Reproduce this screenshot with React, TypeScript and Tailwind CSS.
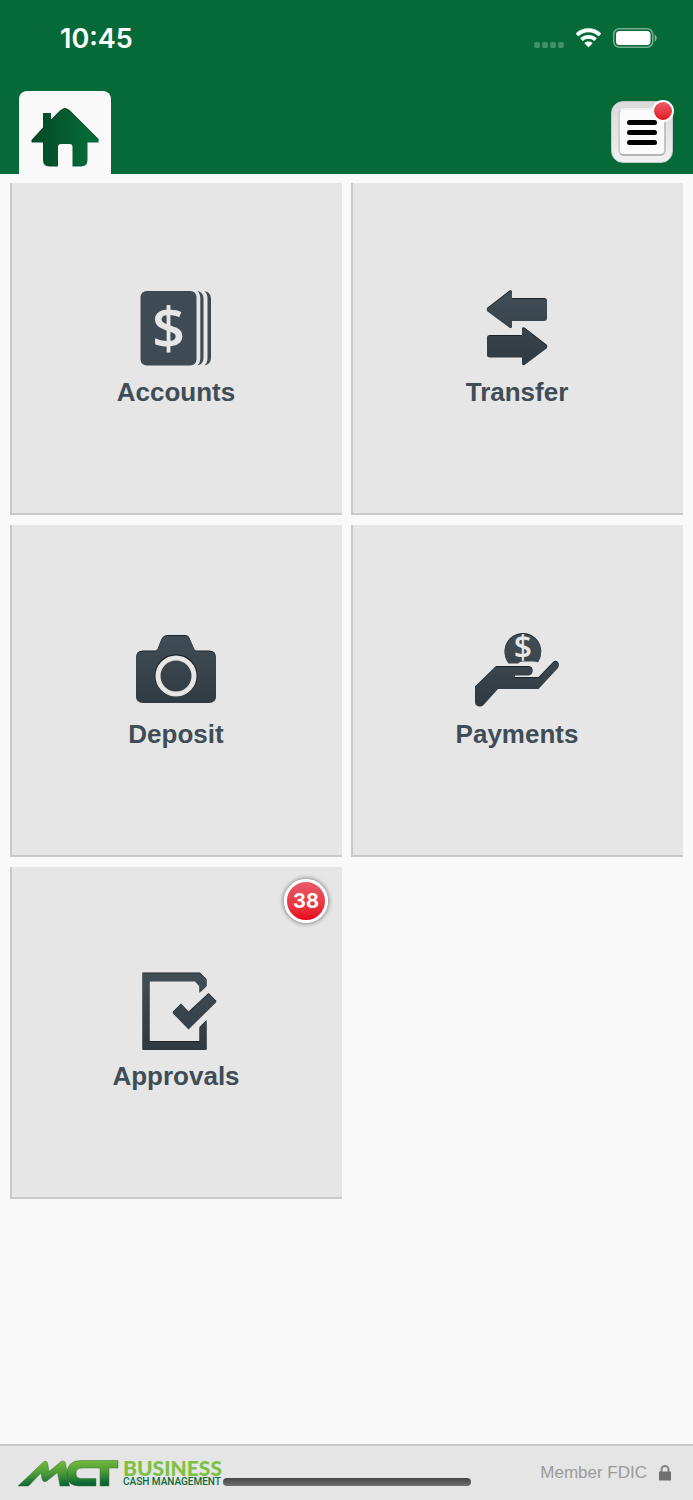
import type { ReactNode } from 'react'

interface Tile {
  id: string
  label: string
  icon: ReactNode
  badge?: number
}

// Shared slate gradient with a dark edge along the top of the shape
function SlateIcon({ id, shape, children }: { id: string; shape: string; children?: ReactNode }) {
  return (
    <svg viewBox="0 0 100 80" className="h-20 w-[100px] overflow-visible" aria-hidden="true">
      <defs>
        <linearGradient id={id} x1="0" y1="0" x2="0" y2="80" gradientUnits="userSpaceOnUse">
          <stop offset="0" stopColor="#424e57" />
          <stop offset="1" stopColor="#2e3840" />
        </linearGradient>
      </defs>
      <path d={shape} fill="#1b2329" fillRule="evenodd" />
      <path d={shape} fill={`url(#${id})`} fillRule="evenodd" transform="translate(0 1)" />
      {children}
    </svg>
  )
}

function AccountsIcon() {
  return (
    <svg viewBox="0 0 100 80" className="h-20 w-[100px] overflow-visible" aria-hidden="true">
      <g fill="#3f4b54">
        <rect x="14.5" y="2" width="56" height="74.5" rx="6" />
        <path d="M71.500 2C75.500 3 77.500 5.500 77.500 10V68.500C77.500 73 75.500 75.500 71.500 76.500C73.500 74.500 74.300 72.500 74.300 69V9.500C74.300 6 73.500 4 71.500 2Z" />
        <path d="M78.500 2C82.800 3 85 5.500 85 10V68.500C85 73 82.800 75.500 78.500 76.500C80.500 74.500 81.500 72.500 81.500 69V9.500C81.500 6 80.500 4 78.500 2Z" />
      </g>
      <text
        x="42.500"
        y="60"
        textAnchor="middle"
        className="fill-[#e6e6e6] font-['Open_Sans',sans-serif] text-[58px] font-semibold"
      >
        $
      </text>
    </svg>
  )
}

function TransferIcon() {
  return (
    <SlateIcon
      id="transfer"
      shape="M20.500 18.500L42.500 1.500Q45 0.500 45 3V9H77Q80 9 80 12V28Q80 31 77 31H45V36.500Q45 39 42.500 37.800L20.500 21.500Q19 20 20.500 18.500ZM79.500 55.500L57.500 38.500Q55 37.300 55 40V46H23Q20 46 20 49V65Q20 67.500 23 67.500H55V73.500Q55 76 57.500 75L79.500 58.500Q81 57 79.500 55.500Z"
    />
  )
}

function DepositIcon() {
  return (
    <SlateIcon
      id="deposit"
      shape="M36.500 4H59Q62 4 63.500 7L68.500 18.500L70 19.500H83Q90 19.500 90 26.500V64.500Q90 71 83 71H17Q10 71 10 64.500V26.500Q10 19.500 17 19.500H30L31.500 18L35 9Q37 4 42 4Z"
    >
      <circle cx="50" cy="44.500" r="21.300" fill="#1b2329" />
      <circle cx="50" cy="45" r="18" fill="url(#deposit)" stroke="#e6e6e6" strokeWidth="5" />
    </SlateIcon>
  )
}

function PaymentsIcon() {
  return (
    <SlateIcon
      id="payments"
      shape="M41.500 31.500A18.300 18.300 0 1 1 71 30.500Q69.500 29.500 66 29.500H56Q53 29.500 51 31.500ZM29 35H61Q65.500 35 65.500 39Q65.500 43 61.500 43.500H48V46H71.500L86 31Q88.500 28.500 91 31Q92.500 33 91 36L71.500 57H31L16.500 73Q14 75.500 10.500 74Q8 73 8 70V55.500Z"
    >
      <text
        x="56"
        y="28"
        textAnchor="middle"
        className="fill-[#e6e6e6] font-['Open_Sans',sans-serif] text-[32px] font-semibold"
      >
        $
      </text>
    </SlateIcon>
  )
}

function ApprovalsIcon() {
  return (
    <SlateIcon
      id="approvals"
      shape="M16.500 -0.500H74L80.500 6V12.500L73.500 19V12.500L69 7.500H23.500V68H73.500V54L80.500 47V76H16.500ZM46.500 39L55 30.500L62.500 38.500L82.500 20L90.500 28L62.500 55.500Z"
    />
  )
}

const tiles: Tile[] = [
  { id: 'accounts', label: 'Accounts', icon: <AccountsIcon /> },
  { id: 'transfer', label: 'Transfer', icon: <TransferIcon /> },
  { id: 'deposit', label: 'Deposit', icon: <DepositIcon /> },
  { id: 'payments', label: 'Payments', icon: <PaymentsIcon /> },
  { id: 'approvals', label: 'Approvals', icon: <ApprovalsIcon />, badge: 38 },
]

function StatusBar() {
  return (
    <div className="flex h-[78px] items-center justify-between pr-9 pl-[60px]">
      <span className="font-['Inter',sans-serif] text-[27px] leading-8 font-semibold text-white">10:45</span>
      <div className="flex items-center gap-[11px] pb-[2px]">
        <div className="mt-[14px] flex gap-[2px]">
          <span className="size-[6px] rounded-[2px] bg-white/25" />
          <span className="size-[6px] rounded-[2px] bg-white/25" />
          <span className="size-[6px] rounded-[2px] bg-white/25" />
          <span className="size-[6px] rounded-[2px] bg-white/25" />
        </div>
        <svg viewBox="0 0 27 20" className="h-5 w-[27px] fill-white" aria-hidden="true">
          <path d="M13.500 4.200C17.200 4.200 20.600 5.600 23.200 8Q23.600 8.400 24 8L26 6Q26.400 5.600 26 5.200C22.700 2 18.300 0.300 13.500 0.300S4.300 2 1 5.200Q0.600 5.600 1 6L3 8Q3.400 8.400 3.800 8C6.400 5.600 9.800 4.200 13.500 4.200Z" />
          <path d="M13.500 10.800C15.500 10.800 17.300 11.500 18.700 12.700Q19.100 13.100 19.500 12.700L21.500 10.700Q21.900 10.300 21.500 9.900C19.400 8 16.600 6.900 13.500 6.900S7.600 8 5.500 9.900Q5.100 10.300 5.500 10.700L7.500 12.700Q7.900 13.100 8.300 12.700C9.700 11.500 11.500 10.800 13.500 10.800Z" />
          <path d="M17.400 14.900Q17.700 15.200 17.400 15.500L13.900 19Q13.500 19.400 13.100 19L9.600 15.500Q9.300 15.200 9.600 14.900C10.700 14 12 13.500 13.500 13.500S16.300 14 17.400 14.900Z" />
        </svg>
        <svg viewBox="0 0 44 20" className="h-5 w-11" aria-hidden="true">
          <rect x="0.750" y="0.750" width="39" height="18.500" rx="5.500" fill="none" stroke="#fff" strokeOpacity="0.450" strokeWidth="1.500" />
          <rect x="3" y="3" width="34.500" height="14" rx="3.500" fill="#fff" />
          <path d="M41.700 6.500C44.300 7.500 44.300 12.500 41.700 13.500Z" fill="#fff" fillOpacity="0.500" />
        </svg>
      </div>
    </div>
  )
}

function Header() {
  return (
    <header className="bg-[#056a38]">
      <StatusBar />
      <nav className="flex items-center justify-between pt-[13px] pr-5 pl-[19px]">
        <a
          href="#home"
          aria-label="Home"
          className="flex h-[83px] w-[92px] items-center justify-center rounded-t-lg bg-[#f9f9f9] pt-2"
        >
          <svg viewBox="0 0 68 60" className="h-[60px] w-[68px]" aria-hidden="true">
            <defs>
              <linearGradient id="home" x1="0" x2="1" y1="0" y2="0">
                <stop offset="0.150" stopColor="#044d29" />
                <stop offset="0.850" stopColor="#056a38" />
              </linearGradient>
            </defs>
            <path
              d="M0.500 33L12 20.500V6H20V12.500L29 3.500Q34 -1.500 39 3.500L67.500 32V34H0.500Z"
              fill="#123824"
            />
            <path
              d="M0.500 34L12 21.500V6H20V13.500L29 4.500Q34 -0.500 39 4.500L67.500 33V35.500H56.500V53Q56.500 59.500 50 59.500H41.500V40Q41.500 37 38.500 37H30Q27 37 27 40V59.500H18.500Q12 59.500 12 53V35.500H0.500Z"
              fill="url(#home)"
            />
          </svg>
        </a>
        <button
          type="button"
          aria-label="Menu"
          className="relative mb-[2px] flex size-[62px] items-center justify-center rounded-xl border border-[#c4c9c6] bg-linear-to-b from-[#dadada] to-[#f1f1f1]"
        >
          <span className="flex size-12 flex-col items-center justify-center gap-[5px] rounded-md border-2 border-t-[#eeeeee] border-r-[#c4c4c4] border-b-[#b4b4b4] border-l-[#d0d0d0] bg-[#fafafa] pt-[2px]">
            <span className="h-[5px] w-[30px] rounded-full bg-black" />
            <span className="h-[5px] w-[30px] rounded-full bg-black" />
            <span className="h-[5px] w-[30px] rounded-full bg-black" />
          </span>
          <span className="absolute -top-[2px] -right-[2px] size-[22px] rounded-full border-2 border-white bg-linear-to-b from-[#e85a68] to-[#e30b1c]" />
        </button>
      </nav>
    </header>
  )
}

function Logo() {
  return (
    <a href="#home" className="flex items-center gap-1" aria-label="MCT Business Cash Management">
      <svg viewBox="0 0 101 27" className="h-[27px] w-[101px]" aria-hidden="true">
        <defs>
          <linearGradient id="mct" x1="0" y1="0" x2="0.150" y2="1">
            <stop offset="0.100" stopColor="#74b83b" />
            <stop offset="0.500" stopColor="#4f9f38" />
            <stop offset="1" stopColor="#0b6437" />
          </linearGradient>
        </defs>
        <path
          d="M0 26L25.500 2Q28.500 -0.500 29.500 3L31 11.500L42.500 2Q46.500 -0.800 47.500 3.500L51.500 26H42L39.500 12.500L29.500 20.500Q25.500 23.500 24 19L23 13L10.500 26ZM100 0.500V8H91V26H82V8H64Q58 8 58 13.500Q58 18.500 63.500 18.500H78V26H61Q49 26 49 14Q49 0.500 63 0.500Z"
          fill="url(#mct)"
          stroke="#35702c"
          strokeWidth="0.500"
        />
      </svg>
      <span className="flex flex-col whitespace-nowrap">
        <span className="font-['Lato',sans-serif] text-[21px] leading-[17px] font-black text-[#7cc142]">BUSINESS</span>
        <span className="font-['Roboto',sans-serif] text-[10px] leading-3 font-medium text-[#0b6b3a]">
          CASH MANAGEMENT
        </span>
      </span>
    </a>
  )
}

function Footer() {
  return (
    <footer className="relative flex h-14 items-center justify-between border-t-2 border-[#cbcbcb] bg-[#e5e5e5] pr-[22px] pl-[18px]">
      <Logo />
      <div className="flex items-center gap-3 text-[17px] leading-5 text-[#9b9b9b]">
        <span>Member FDIC</span>
        <svg viewBox="0 0 12 16" className="h-4 w-3" aria-hidden="true">
          <path d="M2.500 8V4.500A3.500 3.500 0 0 1 9.500 4.500V8" fill="none" stroke="#858585" strokeWidth="2" />
          <rect y="6.500" width="12" height="9" rx="0.500" fill="#707070" />
        </svg>
      </div>
      <span className="absolute bottom-[14px] left-1/2 h-2 w-[248px] -translate-x-1/2 rounded-full bg-linear-to-b from-[#444444] to-[#707070]" />
    </footer>
  )
}

export default function App() {
  return (
    <div className="flex min-h-screen flex-col bg-[#f9f9f9] font-['Liberation_Sans',Arial,sans-serif]">
      <Header />
      <main className="grid flex-1 grid-cols-2 content-start gap-x-[9px] gap-y-[10px] px-[10px] pt-[9px] pb-10">
        {tiles.map((tile) => (
          <a
            key={tile.id}
            href={`#${tile.id}`}
            className="relative flex aspect-square flex-col items-center justify-center gap-[7px] bg-[#e6e6e6] pb-[2px] shadow-[inset_2px_-2px_0_#c9c9c9]"
          >
            {tile.icon}
            <span className="text-[26px] leading-8 font-bold text-[#3f4d57]">{tile.label}</span>
            {tile.badge && (
              <span className="absolute top-3 right-[14px] flex size-11 items-center justify-center rounded-full border-3 border-white bg-linear-to-b from-[#e8596a] to-[#e8001a] font-['Inter',sans-serif] text-[20px] leading-6 font-bold text-white shadow-[0_0_4px_1px_rgba(0,0,0,0.4)]">
                {tile.badge}
              </span>
            )}
          </a>
        ))}
      </main>
      <Footer />
    </div>
  )
}
